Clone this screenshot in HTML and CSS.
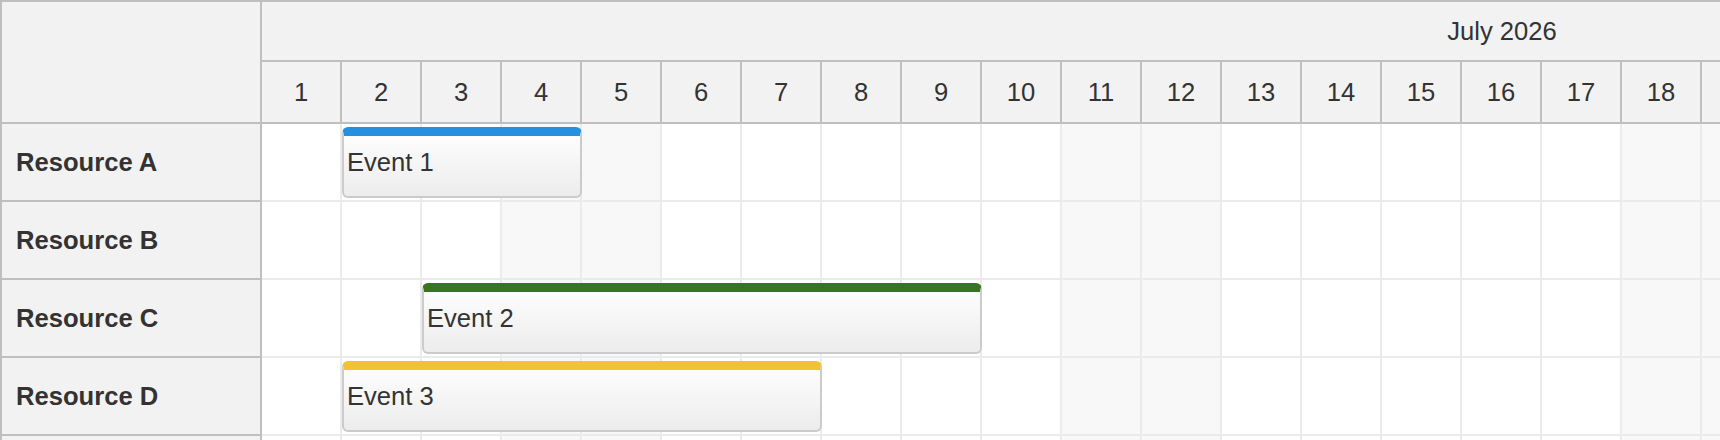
FILE: index.html
```html
<!DOCTYPE html>
<html lang="en">
  <head>
    <meta charset="UTF-8" />
    <meta name="viewport" content="width=device-width, initial-scale=1.0" />
    <title>Resource timeline</title>
    <link rel="stylesheet" href="styles.css">
  </head>
  <body>
    <div class="scheduler">
      <!-- Resource names -->
      <div class="resources">
        <div class="corner"></div>
        <div class="res">Resource A</div>
        <div class="res">Resource B</div>
        <div class="res">Resource C</div>
        <div class="res">Resource D</div>
        <div class="res"></div>
      </div>

      <!-- Timeline: month, days and one lane per resource -->
      <div class="timeline">
        <div class="month">July 2026</div>
        <div class="days" id="days"></div>
        <div class="lane" data-event="Event 1" data-start="2" data-span="3" data-color="blue"></div>
        <div class="lane"></div>
        <div class="lane" data-event="Event 2" data-start="3" data-span="7" data-color="green"></div>
        <div class="lane" data-event="Event 3" data-start="2" data-span="6" data-color="yellow"></div>
        <div class="lane"></div>
      </div>
    </div>
    <script src="script.js"></script>
  </body>
</html>
```

FILE: styles.css
```css
body {
  margin: 0;
  font-family: "Liberation Sans", Arial, sans-serif;
  font-size: 25.6px;
  color: #333;
  background: #fff;
  overflow: hidden;
}

.scheduler {
  display: flex;
  border-top: 2px solid #bfbfbf;
  border-left: 2px solid #bfbfbf;
}

/* Left column */
.resources {
  flex: 0 0 260px;
  box-sizing: border-box;
  border-right: 2px solid #bfbfbf;
  background: #f2f2f2;
}

.corner {
  height: 120px;
  border-bottom: 2px solid #bfbfbf;
}

.res {
  height: 76px;
  border-bottom: 2px solid #bfbfbf;
  display: flex;
  align-items: center;
  padding-left: 14px;
  font-weight: bold;
}

/* Timeline */
.timeline {
  flex: 1;
  min-width: 0;
  overflow: hidden;
}

.month {
  width: 2480px;
  height: 58px;
  display: flex;
  align-items: center;
  justify-content: center;
  background: #f2f2f2;
  border-bottom: 2px solid #bfbfbf;
}

.days {
  display: grid;
  grid-template-columns: repeat(31, 80px);
  height: 60px;
  background: #f2f2f2;
  border-bottom: 2px solid #bfbfbf;
}

.day {
  box-sizing: border-box;
  border-right: 2px solid #bfbfbf;
  display: flex;
  align-items: center;
  justify-content: center;
}

.lane {
  display: grid;
  grid-template-columns: repeat(31, 80px);
  grid-template-rows: 76px;
  border-bottom: 2px solid #ebebeb;
}

.cell {
  grid-row: 1;
  border-right: 2px solid #ebebeb;
}

.cell.weekend {
  background: #f8f8f8;
}

/* Event bars */
.event {
  grid-row: 1;
  z-index: 1;
  align-self: start;
  box-sizing: border-box;
  height: 71px;
  margin-top: 3px;
  padding: 12px 3px 0;
  border: 2px solid #cbcbcb;
  border-top: 9px solid #2590e0;
  border-radius: 6px;
  background: linear-gradient(to bottom, #fdfdfd, #ececec);
  white-space: nowrap;
  overflow: hidden;
}

.event.green {
  border-top-color: #38761d;
}

.event.yellow {
  border-top-color: #f1c232;
}
```

FILE: script.js
```js
// July 2026: the 1st is a Wednesday
const firstWeekday = 3;
const dayCount = 31;

function isWeekend(day) {
  const wd = (firstWeekday + day - 1) % 7;
  return wd === 0 || wd === 6;
}

const days = document.getElementById("days");
for (let d = 1; d <= dayCount; d++) {
  const el = document.createElement("div");
  el.className = "day";
  el.textContent = d;
  days.appendChild(el);
}

document.querySelectorAll(".lane").forEach((lane) => {
  for (let d = 1; d <= dayCount; d++) {
    const cell = document.createElement("div");
    cell.className = isWeekend(d) ? "cell weekend" : "cell";
    cell.style.gridColumn = d;
    lane.appendChild(cell);
  }

  if (lane.dataset.event) {
    const ev = document.createElement("div");
    ev.className = "event " + lane.dataset.color;
    ev.textContent = lane.dataset.event;
    ev.style.gridColumn = lane.dataset.start + " / span " + lane.dataset.span;
    lane.appendChild(ev);
  }
});
```
